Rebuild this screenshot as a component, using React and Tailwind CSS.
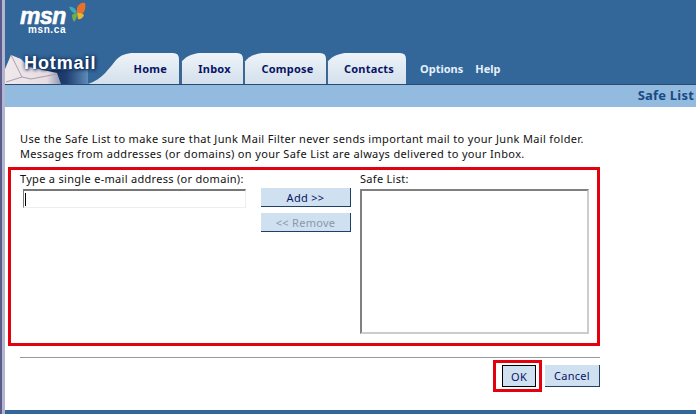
const tahoma = { fontFamily: '"Noto Sans", sans-serif' }
const arial = { fontFamily: '"Liberation Sans", sans-serif' }

function Butterfly() {
  return (
    <svg width="17" height="21" viewBox="0 0 17 21" className="absolute left-[64px] top-[2px]">
      <path d="M8 6 C9 2 13 0 16 1 C17 5 16 10 13 12 C11 13 9 12 8 11Z" fill="#e8702a" />
      <path d="M0 5 C3 4 7 6 8 11 C5 12 2 10 0 5Z" fill="#3fa9b5" />
      <path d="M8 11 C10 11 13 11 15 13 C14 16 11 18 9 17Z" fill="#e5b830" />
      <path d="M3 13 C5 11 7 11 8 12 C8 15 7 18 5 20 C4 18 3 16 3 13Z" fill="#6fae4c" />
    </svg>
  )
}

function Envelope() {
  return (
    <svg width="62" height="31" viewBox="0 0 62 31" className="absolute left-0 top-0">
      <defs>
        <linearGradient id="env" x1="0" y1="0" x2="1" y2="0">
          <stop offset="0" stopColor="#efe9ec" />
          <stop offset="0.75" stopColor="#e6dde2" />
          <stop offset="1" stopColor="#8a96b0" />
        </linearGradient>
      </defs>
      <path d="M0 28 L0 16 L6 2 L16 6 L24 14 L52 20 L56 31 L0 31Z" fill="url(#env)" />
      <path d="M6 2 L17 24 L26 26 L52 21" fill="none" stroke="#ad9ca8" strokeWidth="1" />
      <path d="M1 29 L17 24" fill="none" stroke="#ad9ca8" strokeWidth="1" />
    </svg>
  )
}

function Tab({ label, first, width }) {
  const w = width
  const d = first
    ? `M0 31 C14 27 22 14 28 7 C33 2 38 0 46 0 L${w - 6} 0 Q${w} 0 ${w} 6 L${w} 31Z`
    : `M0.5 31 L0.5 9 C4 4 10 1 18 0 L${w - 6} 0 Q${w} 0 ${w} 6 L${w} 31Z`
  return (
    <div className="relative h-[31px] shrink-0" style={{ width: w }}>
      <svg width={w} height="31" className="absolute left-0 top-0">
        <defs>
          <linearGradient id={`tab-${label}`} x1="0" y1="0" x2="0" y2="1">
            <stop offset="0" stopColor="#eef3f8" />
            <stop offset="1" stopColor="#d3e0ec" />
          </linearGradient>
        </defs>
        <path d={d} fill={`url(#tab-${label})`} />
        {!first && <path d="M0.5 31 L0.5 9" stroke="#47648a" strokeWidth="1" />}
      </svg>
      <span
        className={`absolute top-[8px] text-[11px] leading-[15px] font-bold tracking-[0.2px] text-[#0a1464] ${first ? "right-[12px]" : "left-[5px] right-0 text-center"}`}
        style={tahoma}
      >
        {label}
      </span>
    </div>
  )
}

function Header() {
  return (
    <div className="h-[85px] bg-[#336699] border-b border-[#2b4a70] flex flex-col">
      <div className="relative h-[53px] shrink-0">
        <div className="absolute left-[15px] top-[8px] text-[23px] leading-[16px] font-bold italic text-white tracking-[-0.5px] [-webkit-text-stroke:0.6px_white]" style={arial}>
          msn
        </div>
        <div className="absolute left-[23px] top-[25px] text-[10px] leading-[10px] font-bold tracking-[0.6px] text-white" style={arial}>
          msn.ca
        </div>
        <Butterfly />
      </div>
      <div className="flex items-end h-[31px]">
        <div className="relative w-[83px] h-[31px] shrink-0">
          <div className="absolute left-[40px] right-0 bottom-0 h-[14px] bg-gradient-to-r from-[#142a54] via-[#1f3f70] to-[#5f8cb8]" />
          <Envelope />
          <span className="absolute left-[19px] top-0 text-[18px] leading-[20px] font-bold tracking-[0.9px] text-white [text-shadow:1px_1px_3px_#0c2350,0_0_4px_#0c2350]" style={arial}>
            Hotmail
          </span>
        </div>
        <Tab label="Home" first width={91} />
        <div className="w-[2px] shrink-0" />
        <Tab label="Inbox" width={62} />
        <div className="w-[1px] shrink-0" />
        <Tab label="Compose" width={82} />
        <div className="w-[1px] shrink-0" />
        <Tab label="Contacts" width={79} />
        <div className="flex gap-[12px] pl-[14px] pb-[8px] text-[11px] leading-[15px] font-bold text-[#e4f0fb]" style={tahoma}>
          <span>Options</span>
          <span>Help</span>
        </div>
      </div>
    </div>
  )
}

function Btn({ children, className }) {
  return (
    <div
      className={`flex items-center justify-center bg-[#cfe0f0] border-r border-b border-[#1f3f66] text-[11px] leading-none tracking-[0.3px] ${className}`}
      style={tahoma}
    >
      {children}
    </div>
  )
}

export default function App() {
  return (
    <div className="w-[696px] h-[414px] overflow-hidden flex bg-white">
      <div className="w-[2px] shrink-0 bg-[#5d5a8c]" />
      <div className="w-[3px] shrink-0 bg-[#b4b6d0]" />
      <div className="flex-1 flex flex-col min-w-0">
        <Header />
        <div className="h-[22px] shrink-0 bg-[#93bbe0] flex justify-end pr-[2px] pt-[1px]">
          <span className="text-[13px] leading-[18px] font-bold tracking-[0.2px] text-[#1a4a80]" style={tahoma}>Safe List</span>
        </div>
        <div className="flex-1 flex flex-col pl-[3px]">
          <p className="pl-[12px] pt-[24px] h-[60px] text-[11px] leading-[15px] tracking-[0.34px] text-[#111] whitespace-nowrap" style={tahoma}>
            Use the Safe List to make sure that Junk Mail Filter never sends important mail to your Junk Mail folder.
            <br />
            Messages from addresses (or domains) on your Safe List are always delivered to your Inbox.
          </p>
          <div className="w-[592px] h-[179px] border-[3px] border-[#e3000f] flex text-[11px] leading-[15px] tracking-[0.3px] text-[#111]" style={tahoma}>
            <div className="w-[238px] pl-[9px] pt-[1px] shrink-0">
              <div className="h-[16px] whitespace-nowrap">Type a single e-mail address (or domain):</div>
              <div className="ml-[3px] mt-[2px] w-[223px] h-[19px] border-t-2 border-l border-t-[#777] border-l-[#777] border-b border-r border-b-[#eee] border-r-[#eee] flex items-center pl-[1px]">
                <div className="w-[1px] h-[13px] bg-black" />
              </div>
            </div>
            <div className="w-[90px] pt-[18px] shrink-0 ml-[12px] flex flex-col gap-[6px]">
              <Btn className="h-[19px] text-[#0a1464]">Add &gt;&gt;</Btn>
              <Btn className="h-[19px] text-[#8b98a8]">&lt;&lt; Remove</Btn>
            </div>
            <div className="ml-[9px] pt-[1px] w-[229px] shrink-0">
              <div className="h-[16px]">Safe List:</div>
              <div className="mt-[2px] w-[229px] h-[145px] border-2 border-t-[#808080] border-l-[#808080] border-b-[#ccc] border-r-[#ccc] bg-white" />
            </div>
          </div>
          <div className="ml-[12px] mt-[11px] w-[580px] border-t border-[#999]" />
          <div className="ml-[12px] w-[580px] mt-[2px] flex justify-end items-start">
            <div className="border-[3px] border-[#e3000f] w-[49px] h-[32px] pl-[6px] pt-[2px]">
              <Btn className="w-[34px] h-[22px] border border-black text-[#0a1464]">OK</Btn>
            </div>
            <Btn className="ml-[3px] mt-[5px] w-[55px] h-[22px] text-[#0a1464]">Cancel</Btn>
          </div>
        </div>
        <div className="h-[4px] shrink-0 bg-[#336699]" />
      </div>
    </div>
  )
}
